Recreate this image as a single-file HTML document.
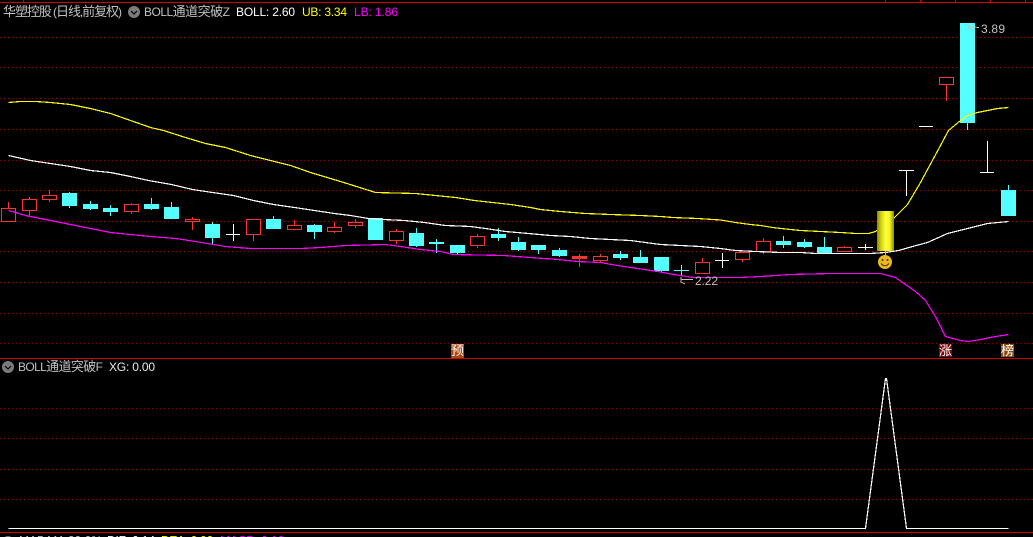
<!DOCTYPE html>
<html><head><meta charset="utf-8"><title>华塑控股</title>
<style>
html,body{margin:0;padding:0;background:#000;width:1033px;height:537px;overflow:hidden}
svg{display:block;position:absolute;left:0;top:0}
text{font-family:"Liberation Sans","WenQuanYi Zen Hei","Noto Sans CJK SC",sans-serif;font-size:12px}
tspan.c{font-size:13px}
</style></head><body>
<svg width="1033" height="537" viewBox="0 0 1033 537" xmlns="http://www.w3.org/2000/svg">
<defs>
<linearGradient id="y" x1="0" x2="1" y1="0" y2="0">
<stop offset="0" stop-color="#8a8a00"/><stop offset=".2" stop-color="#c8c810"/><stop offset=".5" stop-color="#ffff38"/><stop offset=".75" stop-color="#f4f420"/><stop offset="1" stop-color="#8a8a00"/>
</linearGradient>
</defs>
<rect width="1033" height="537" fill="#000"/>
<path d="M0 37.5H1033M0 67.5H1033M0 98.5H1033M0 129.5H1033M0 160.5H1033M0 190.5H1033M0 221.5H1033M0 251.5H1033M0 282.5H1033M0 313.5H1033M0 343.5H1033M0 408.5H1033M0 438.5H1033M0 469.5H1033M0 499.5H1033" stroke="#8c0000" stroke-width="1" stroke-dasharray="1 3" fill="none"/>
<g shape-rendering="crispEdges">
<path d="M0 2.5H1033M0 358.5H1033M0 532.5H1033" stroke="#d00000" fill="none"/>
<path d="M23.5 0V2M885.5 0V2M920.5 0V2M955.5 0V2M990.5 0V2M1025.5 0V2" stroke="#d00000" fill="none"/>

<!-- red wicks -->
<path stroke="#ff3232" fill="none" d="M8.5 202V208M29.5 197V216M49.5 190V202M131.5 203V214M192.5 217V230M253.5 219V241M294.5 220V229M334.5 222V233M355.5 219V228M396.5 229V244M477.5 234V248M579.5 254V267M600.5 254V262M702.5 258V273M742.5 252V262M763.5 238V254M844.5 246V252M946.5 84V101"/>
<!-- red bodies -->
<g fill="#000" stroke="#ff3232">
<rect x="1.5" y="208.5" width="14" height="13"/>
<rect x="22.5" y="199.5" width="14" height="11"/>
<rect x="42.5" y="195.5" width="14" height="4"/>
<rect x="124.5" y="204.5" width="14" height="7"/>
<rect x="185.5" y="219.5" width="14" height="2"/>
<rect x="246.5" y="219.5" width="14" height="15"/>
<rect x="287.5" y="225.5" width="14" height="4"/>
<rect x="327.5" y="227.5" width="14" height="4"/>
<rect x="348.5" y="222.5" width="14" height="3"/>
<rect x="389.5" y="231.5" width="14" height="9"/>
<rect x="470.5" y="236.5" width="14" height="9"/>
<rect x="572.5" y="256.5" width="14" height="2" fill="#ff3232"/>
<rect x="593.5" y="256.5" width="14" height="4"/>
<rect x="695.5" y="262.5" width="14" height="11"/>
<rect x="735.5" y="252.5" width="14" height="7"/>
<rect x="756.5" y="241.5" width="14" height="10"/>
<rect x="837.5" y="247.5" width="14" height="4"/>
<rect x="939.5" y="77.5" width="14" height="7"/>
</g>
<!-- cyan wicks -->
<path stroke="#54ffff" fill="none" d="M69.5 192V208M90.5 201V210M110.5 205V216M151.5 198V210M171.5 202V219M212.5 222V244M273.5 216V228M314.5 224V239M375.5 218V239M416.5 228V247M436.5 239V253M457.5 245V255M498.5 228V241M518.5 237V251M538.5 245V254M559.5 248V257M620.5 251V260M640.5 250V263M661.5 257V272M681.5 265V276M783.5 236V248M804.5 239V248M824.5 237V253M967.5 120V130M1008.5 185V190"/>
<path stroke="#54ffff" fill="none" d="M429 242.5H444M674 270.5H689"/>
<!-- cyan bodies -->
<g fill="#54ffff">
<rect x="62" y="193" width="15" height="13"/>
<rect x="83" y="204" width="15" height="5"/>
<rect x="103" y="208" width="15" height="4"/>
<rect x="144" y="204" width="15" height="5"/>
<rect x="164" y="207" width="15" height="12"/>
<rect x="205" y="224" width="15" height="14"/>
<rect x="266" y="219" width="15" height="10"/>
<rect x="307" y="225" width="15" height="7"/>
<rect x="368" y="218" width="15" height="22"/>
<rect x="409" y="233" width="15" height="13"/>
<rect x="429" y="242" width="15" height="2"/>
<rect x="450" y="245" width="15" height="8"/>
<rect x="491" y="234" width="15" height="4"/>
<rect x="511" y="242" width="15" height="8"/>
<rect x="531" y="245" width="15" height="5"/>
<rect x="552" y="250" width="15" height="6"/>
<rect x="613" y="254" width="15" height="4"/>
<rect x="633" y="257" width="15" height="6"/>
<rect x="654" y="257" width="15" height="14"/>
<rect x="776" y="241" width="15" height="4"/>
<rect x="797" y="242" width="15" height="5"/>
<rect x="817" y="247" width="15" height="6"/>
<rect x="960" y="23" width="15" height="100"/>
<rect x="1001" y="190" width="15" height="26"/>
</g>
<!-- white doji -->
<path stroke="#fff" fill="none" d="M226 234.5H240M233.5 224V241M715 260.5H729M722.5 253V268M858 247.5H873M865.5 244V250M899 170.5H914M906.5 170V196M919 126.5H933M980 172.5H994M987.5 141V172"/>

<!-- lines -->
<g transform="translate(.5 .5)" fill="none" stroke-width="1.2">
<polyline stroke="#ffff00" points="8,102 20,101 35,101 50,102 70,104 90,108 110,113 130,120 150,127 163,130 185,137 205,143 225,147 250,155 290,165 310,172 340,181 375,192 415,193 455,197 474,200 510,204 530,207 540,209 560,211 585,213 610,214 640,215 660,216 672,217 697,218 720,219.5 735,222 750,224 760,225 772,227 790,229 800,230 820,231 840,232 855,233 868,233 875,231 893,218 907,204 920,182 940,145 948,130 960,120 967,115 977,112 997,108 1008,107"/>
<polyline stroke="#ffffff" points="8,155 30,160 50,163 70,166 90,170 110,172 130,176 148,180 171,184 192,189 212,192 233,195 253,200 273,204 294,207 314,210 334,213 350,215 368,218 383,219 404,220 424,222 445,225 470,226 485,228 505,231 528,233 550,235 570,236 590,238 610,239 630,240 660,244 680,245 700,246 720,248 735,250 755,251 780,252 800,252 815,253 870,253 885,252 898,250 912,246 927,242 947,233 967,228 987,223 1008,221"/>
<polyline stroke="#ff00ff" points="8,210 15,212 25,215 35,217 50,220 70,224 90,228 110,232 130,234 150,236 175,238 195,241 225,246 250,248 265,248 300,248 320,247 345,245 385,244 400,246 420,249 440,251 453,254 503,255 530,257 557,259 577,261 600,262 617,265 637,268 657,271 673,274 693,277 720,277 740,277 760,276 790,274 830,273 880,273 895,277 905,284 915,291 925,300 935,316 945,336 960,340 968,341 980,339 995,336 1008,334"/>
</g>

<!-- yellow bar -->
<rect x="877" y="211" width="17" height="40" fill="url(#y)"/>
<path d="M885.5 251V255" stroke="#e8c020"/>

<!-- lower pane -->
<polyline transform="translate(.5 .5)" fill="none" stroke="#ffffff" stroke-width="1.2" points="8,528 865,528 885,378 886,378 906,528 1008,528"/>

<!-- price arrows -->
<path d="M968 26.5L979 27.5M968 24V28L972 29M681 279.5H693M681 277V282L685 284" stroke="#c0c0c0" fill="none"/>

<!-- tags -->
<rect x="451" y="344" width="13" height="14" fill="#b04510"/>
<rect x="939" y="344" width="13" height="13" fill="#7c0a10"/>
<rect x="1001" y="344" width="13" height="13" fill="#8c4a10"/>
</g>

<text x="451" y="355" fill="#fff" style="font-size:13px" textLength="13">预</text>
<text x="939" y="355" fill="#fff" style="font-size:13px" textLength="13">涨</text>
<text x="1001" y="355" fill="#fff" style="font-size:13px" textLength="13">榜</text>

<!-- smiley -->
<circle cx="885" cy="262" r="7" fill="#e8b820"/>
<circle cx="882.5" cy="260" r="1" fill="#503000"/>
<circle cx="887.5" cy="260" r="1" fill="#503000"/>
<path d="M881 263.5Q885 268 889 263.5" fill="none" stroke="#503000" stroke-width="1"/>

<!-- header -->
<text x="3" y="16" fill="#c0c0c0" textLength="119"><tspan class="c">华塑控股</tspan> (<tspan class="c">日线</tspan>,<tspan class="c">前复权</tspan>)</text>
<circle cx="134" cy="12" r="6" fill="#7c7c7c"/>
<path d="M131 11L134 14L137 11" stroke="#000" fill="none" stroke-width="1.2"/>
<text x="144" y="16" fill="#c0c0c0" textLength="86">BOLL<tspan class="c">通道突破</tspan>Z</text>
<text x="236" y="16" fill="#ffffff" textLength="59">BOLL: 2.60</text>
<text x="302" y="16" fill="#ffff00" textLength="45">UB: 3.34</text>
<text x="354" y="16" fill="#ff00ff" textLength="44">LB: 1.86</text>

<circle cx="8" cy="367" r="6" fill="#7c7c7c"/>
<path d="M5 366L8 369L11 366" stroke="#000" fill="none" stroke-width="1.2"/>
<text x="18" y="371" fill="#c0c0c0" textLength="85">BOLL<tspan class="c">通道突破</tspan>F</text>
<text x="109" y="371" fill="#e8e8e8" textLength="46">XG: 0.00</text>

<text x="981" y="33" fill="#c0c0c0" textLength="24">3.89</text>
<text x="695" y="285" fill="#c0c0c0" textLength="23">2.22</text>

<!-- bottom strip (clipped text) -->
<circle cx="8" cy="542" r="6" fill="#7c7c7c"/>
<text x="19" y="544.5" fill="#c0c0c0" textLength="83">MA5 MA 20.0%</text>
<text x="107" y="544.5" fill="#fff" textLength="48">DIF: 0.14</text>
<text x="161" y="544.5" fill="#ff0" textLength="52">DEA: 0.06</text>
<text x="220" y="544.5" fill="#f0f" textLength="64">MACD: 0.16</text>
</svg>
</body></html>
